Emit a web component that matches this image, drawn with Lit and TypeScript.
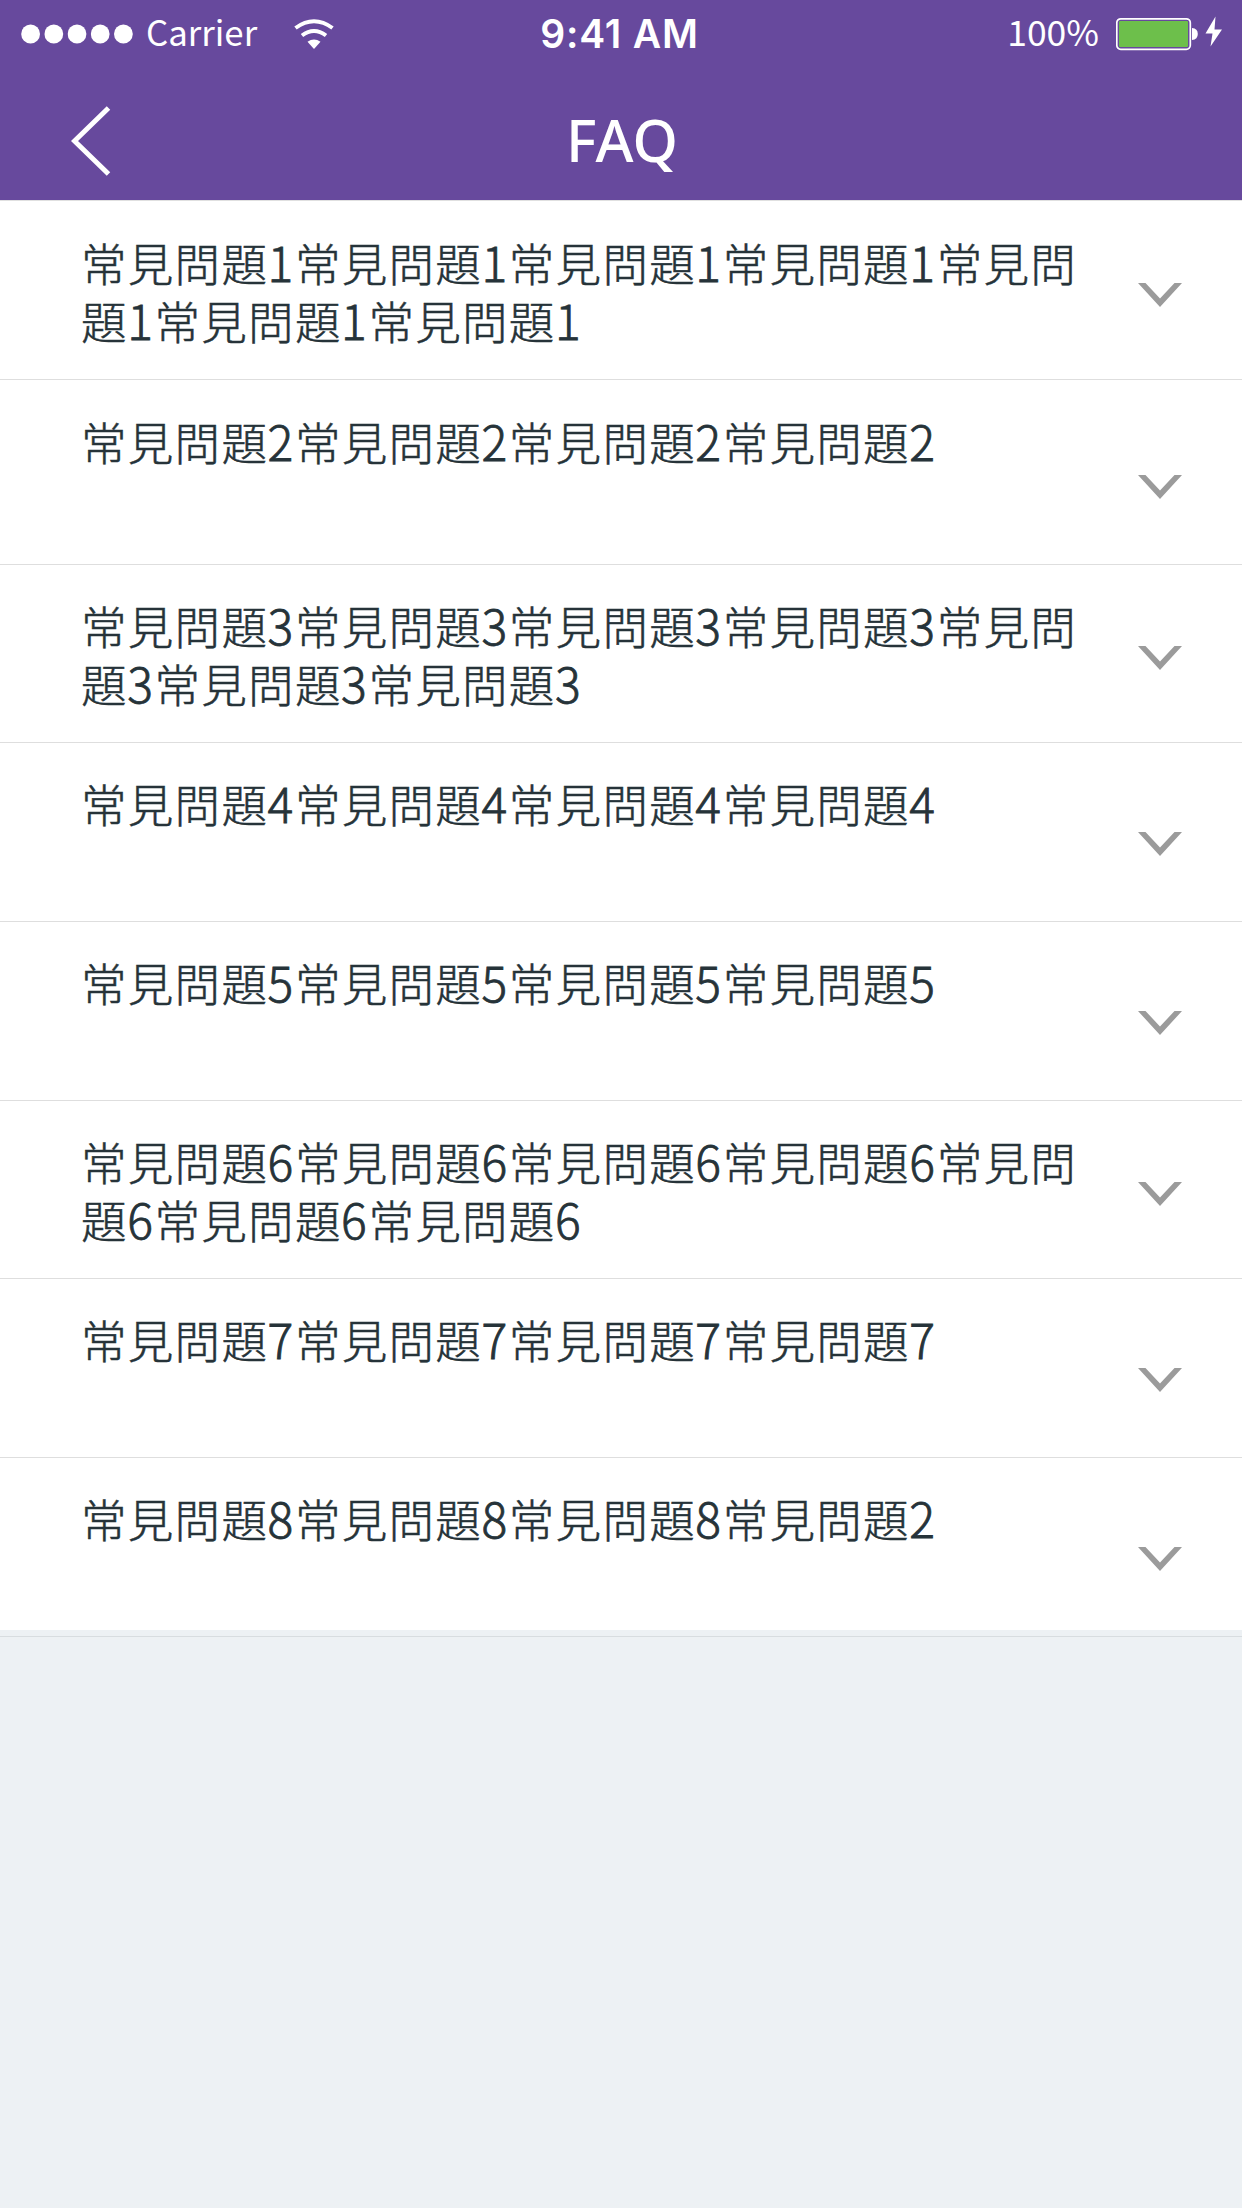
import { LitElement, html, css } from "lit";
import { customElement } from "lit/decorators.js";

const long = (n: number) => `常見問題${n}`.repeat(7);
const short = (n: number) => `常見問題${n}`.repeat(4);

// text, row height (border included), distance from row top to the text and to the chevron
const items = [
  { text: long(1), h: 179, top: 32, arrow: 82 },
  { text: short(2), h: 185, top: 32, arrow: 95 },
  { text: long(3), h: 178, top: 31, arrow: 81 },
  { text: short(4), h: 179, top: 31, arrow: 89 },
  { text: short(5), h: 179, top: 31, arrow: 89 },
  { text: long(6), h: 178, top: 31, arrow: 81 },
  { text: short(7), h: 179, top: 31, arrow: 89 },
  { text: "常見問題8常見問題8常見問題8常見問題2", h: 172, top: 31, arrow: 89 },
];

@customElement("app-root")
export class AppRoot extends LitElement {
  static styles = css`
    :host { display: block; min-height: 2208px; background: #edf1f4; }
    header { background: #67499d; color: #fff; height: 200px; border-bottom: 1px solid #e0e0e0; }
    .status { display: grid; grid-template-columns: 1fr auto 1fr; height: 68px; align-items: center; }
    .left { display: flex; align-items: center; }
    .dots { margin-left: 21px; display: block; }
    .carrier { margin-left: 13px; font-family: "Noto Sans CJK TC", sans-serif; font-size: 34.8px; line-height: 62px; height: 68px; width: 110px; white-space: nowrap; }
    .wifi { margin-left: 37px; display: block; }
    .time { font: 600 39px/66px Inter, sans-serif; letter-spacing: 0.8px; margin-left: -3px; }
    .right { display: flex; align-items: center; justify-content: flex-end; }
    .pct { font-family: "Noto Sans CJK TC", sans-serif; font-size: 35.5px; line-height: 62px; height: 68px; margin-right: 17px; }
    .battery { display: block; }
    .nav { display: grid; grid-template-columns: 1fr auto 1fr; height: 132px; }
    .back { margin: 38px 0 0 71px; display: block; }
    .title { margin: 0; padding-left: 2px; font: 500 58px/143px "Noto Sans", sans-serif; }
    .row { box-sizing: border-box; display: grid; grid-template-columns: 1020px 44px; column-gap: 37px; padding-left: 81px; background: #fff; border-bottom: 1px solid #dedede; overflow: hidden; }
    .row:last-of-type { border-bottom: none; }
    .q { margin: 0; color: #263339; font: 300 45.5px/58px "Noto Sans CJK TC", sans-serif; letter-spacing: 1.3px; word-break: break-all; -webkit-text-stroke: 0.5px #263339; }
    .n { margin-left: -0.7px; font-size: 48px; line-height: 1px; letter-spacing: 1.7px; -webkit-text-stroke: 0.8px #263339; }
    .chev { display: block; }
    footer { height: 6px; border-bottom: 1px solid #d8dde0; }
  `;

  question(text: string) {
    return text.split(/(\d)/).map((s) => (/\d/.test(s) ? html`<span class="n">${s}</span>` : s));
  }

  render() {
    return html`
      <header>
        <div class="status">
          <div class="left">
            <svg class="dots" width="112" height="20" viewBox="0 0 112 20" fill="#fff">
              ${[0, 1, 2, 3, 4].map((i) => html`<svg x=${i * 23.2} width="20" height="20"><circle cx="9.6" cy="10" r="9.4" /></svg>`)}
            </svg>
            <span class="carrier">Carrier</span>
            <svg class="wifi" width="42" height="31" viewBox="-1 0 42 31" fill="none" stroke="#fff" stroke-width="4">
              <path d="M1.500 9Q20-4.600 38.500 9M8 16.500Q20 7.500 32 16.500" />
              <path d="M13.500 22.800Q20 18 26.500 22.800L20 30Z" fill="#fff" stroke="none" />
            </svg>
          </div>
          <span class="time">9:41 AM</span>
          <div class="right">
            <span class="pct">100%</span>
            <svg class="battery" width="126" height="36" viewBox="0 0 126 36">
              <rect x="0.800" y="2.800" width="73.500" height="30.500" rx="4" fill="none" stroke="#fff" stroke-width="1.700" />
              <rect x="3" y="5" width="69" height="26" rx="1" fill="#6dbf4b" />
              <path d="M76 12Q81.800 12.500 81.800 18T76 24Z" fill="#fff" />
              <path d="M99.500 0.500L89.500 17.500H96.500L94.500 30.500L106 13.500H98.500Z" fill="#fff" />
            </svg>
          </div>
        </div>
        <div class="nav">
          <svg class="back" width="40" height="71" viewBox="0 0 40 71" fill="none" stroke="#fff" stroke-width="5"><path d="M37.500 2L3.500 35L37.500 68" /></svg>
          <h1 class="title">FAQ</h1>
        </div>
      </header>
      <main>
        ${items.map(
          (i) => html`<div class="row" style="height:${i.h}px">
            <p class="q" style="padding-top:${i.top}px">${this.question(i.text)}</p>
            <svg class="chev" style="margin-top:${i.arrow}px" width="44" height="24" viewBox="0 0 44 24"><path d="M0 0H7.500L22 15.500L36.500 0H44L22 24Z" fill="#9b9b9b" /></svg>
          </div>`
        )}
      </main>
      <footer></footer>
    `;
  }
}
